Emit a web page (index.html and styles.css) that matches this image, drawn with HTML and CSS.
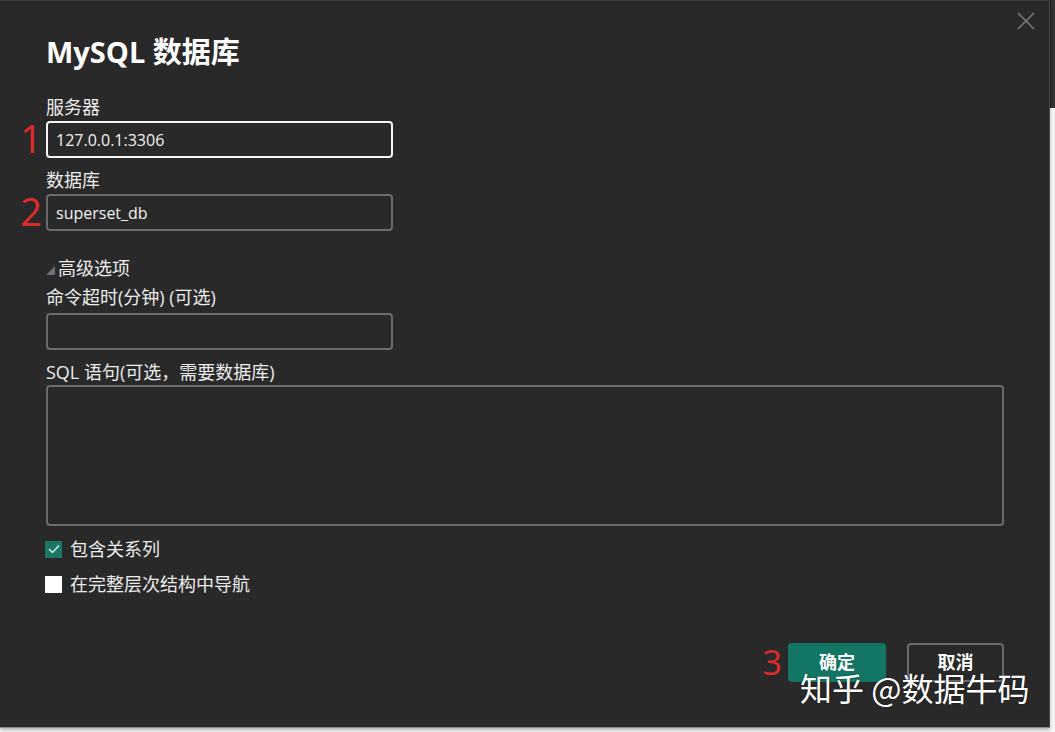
FILE: index.html
```html
<!DOCTYPE html>
<html lang="zh-CN">
<head>
  <meta charset="UTF-8">
  <meta name="viewport" content="width=device-width, initial-scale=1.0">
  <title>MySQL 数据库</title>
  <link rel="stylesheet" href="styles.css">
</head>
<body>
  <div class="page">
    <div class="dialog">
      <button class="closeButton" aria-label="关闭">
        <svg width="18" height="18" viewBox="0 0 18 18"><path d="M1 1 L17 17 M17 1 L1 17" stroke="#7a7a7a" stroke-width="1.6" fill="none"/></svg>
      </button>

      <p class="title">MySQL 数据库</p>

      <label class="label first">服务器</label>
      <div class="field">
        <span class="mark">1</span>
        <input class="input focused" value="127.0.0.1:3306">
      </div>

      <label class="label">数据库</label>
      <div class="field">
        <span class="mark">2</span>
        <input class="input" value="superset_db">
      </div>

      <div class="advanced">
        <svg class="arrow" width="9" height="9" viewBox="0 0 9 9"><polygon points="9,0 9,9 0,9" fill="#6f6f6f"/></svg>
        <span>高级选项</span>
      </div>

      <label class="label near">命令超时(分钟) (可选)</label>
      <input class="input">

      <label class="label">SQL 语句(可选，需要数据库)</label>
      <textarea class="textarea"></textarea>

      <div class="checks">
        <label class="check">
          <span class="box checked">
            <svg width="12" height="10" viewBox="0 0 12 10"><path d="M1 5 L4.5 8.5 L11 1.5" stroke="#d8f0ea" stroke-width="1.5" fill="none"/></svg>
          </span>
          包含关系列
        </label>
        <label class="check">
          <span class="box"></span>
          在完整层次结构中导航
        </label>
      </div>

      <div class="buttons">
        <div class="okWrap">
          <span class="mark small">3</span>
          <button class="okButton">确定</button>
        </div>
        <button class="cancelButton">取消</button>
      </div>

      <p class="watermark">知乎 @数据牛码</p>
    </div>
    <div class="side">
      <div class="sideTop"></div>
    </div>
  </div>
</body>
</html>
```

FILE: styles.css
```css
body, html {
  margin: 0;
  height: 100%;
  background-color: #f4f4f4;
}
.page {
  display: flex;
  height: 728px;
}
.dialog {
  position: relative;
  flex: none;
  width: 1050px;
  height: 728px;
  padding: 0 45px 0 46px;
  box-sizing: border-box;
  background-color: #292929;
  border-top: 1px solid #3c3c3c;
  border-right: 1px solid #4a4a4a;
  border-bottom: 1px solid #8a8a8a;
  box-shadow: 0 2px 3px rgba(0, 0, 0, 0.25);
  display: flex;
  flex-direction: column;
  font-family: "Open Sans", "Noto Sans CJK SC", sans-serif;
  color: #ececec;
}
.side {
  flex: 1;
  background-color: #f4f4f4;
}
.sideTop {
  height: 108px;
  background-color: #333333;
  border-left: 1px solid #1e1e1e;
}
.closeButton {
  position: absolute;
  top: 11px;
  right: 14px;
  padding: 0;
  border: none;
  background: none;
  width: 18px;
  height: 18px;
}
.title {
  margin: 31px 0 0 0;
  font-size: 29px;
  font-weight: bold;
  line-height: 40px;
  color: #ffffff;
}
.label {
  display: block;
  font-size: 18px;
  line-height: 24px;
  margin-top: 10px;
}
.label.first {
  margin-top: 23px;
}
.label.near {
  margin-top: 5px;
}
.field {
  position: relative;
  margin-top: 2px;
}
.mark {
  position: absolute;
  right: 100%;
  top: -5px;
  margin-right: 4px;
  font-family: "Open Sans", sans-serif;
  font-size: 38px;
  line-height: 44px;
  color: #e02b2b;
}
.mark.small {
  font-size: 34px;
  top: -3px;
  margin-right: 6px;
}
.input {
  display: block;
  box-sizing: border-box;
  width: 347px;
  height: 37px;
  margin: 4px 0 0 0;
  padding: 0 8px;
  background-color: #292929;
  border: 2px solid #6b6b6b;
  border-radius: 4px;
  color: #f2f2f2;
  font-family: "Open Sans", "Noto Sans CJK SC", sans-serif;
  font-size: 16px;
  outline: none;
}
.field .input {
  margin-top: 0;
}
.input.focused {
  border-color: #f4f4f4;
}
.advanced {
  display: flex;
  align-items: center;
  margin-top: 25px;
  font-size: 18px;
  line-height: 24px;
}
.arrow {
  margin: 4px 3px 0 0;
}
.textarea {
  display: block;
  box-sizing: border-box;
  width: 100%;
  height: 141px;
  margin: 1px 0 0 0;
  background-color: #292929;
  border: 2px solid #6b6b6b;
  border-radius: 4px;
  resize: none;
  outline: none;
}
.checks {
  display: flex;
  flex-direction: column;
  gap: 11px;
  margin-top: 11px;
}
.check {
  display: flex;
  align-items: center;
  gap: 8px;
  font-size: 18px;
  line-height: 24px;
}
.box {
  display: flex;
  align-items: center;
  justify-content: center;
  width: 17px;
  height: 17px;
  margin-left: -1px;
  background-color: #ffffff;
}
.box.checked {
  background-color: #1a7665;
}
.buttons {
  display: flex;
  justify-content: flex-end;
  gap: 21px;
  margin-top: 47px;
}
.okWrap {
  position: relative;
}
.okButton, .cancelButton {
  box-sizing: border-box;
  width: 98px;
  height: 39px;
  border-radius: 4px;
  padding: 0 0 3px 0;
  font-family: "Noto Sans CJK SC", sans-serif;
  font-size: 18px;
  font-weight: bold;
  color: #ffffff;
  cursor: pointer;
}
.okButton {
  border: none;
  background-color: #137563;
}
.cancelButton {
  width: 97px;
  border: 2px solid #6b6b6b;
  background-color: #292929;
}
.watermark {
  position: absolute;
  left: 800px;
  top: 664px;
  margin: 0;
  font-family: "Noto Sans CJK SC", sans-serif;
  font-size: 32px;
  line-height: 44px;
  color: #ffffff;
  text-shadow: 0 0 2px rgba(0, 0, 0, 0.5);
}
```
